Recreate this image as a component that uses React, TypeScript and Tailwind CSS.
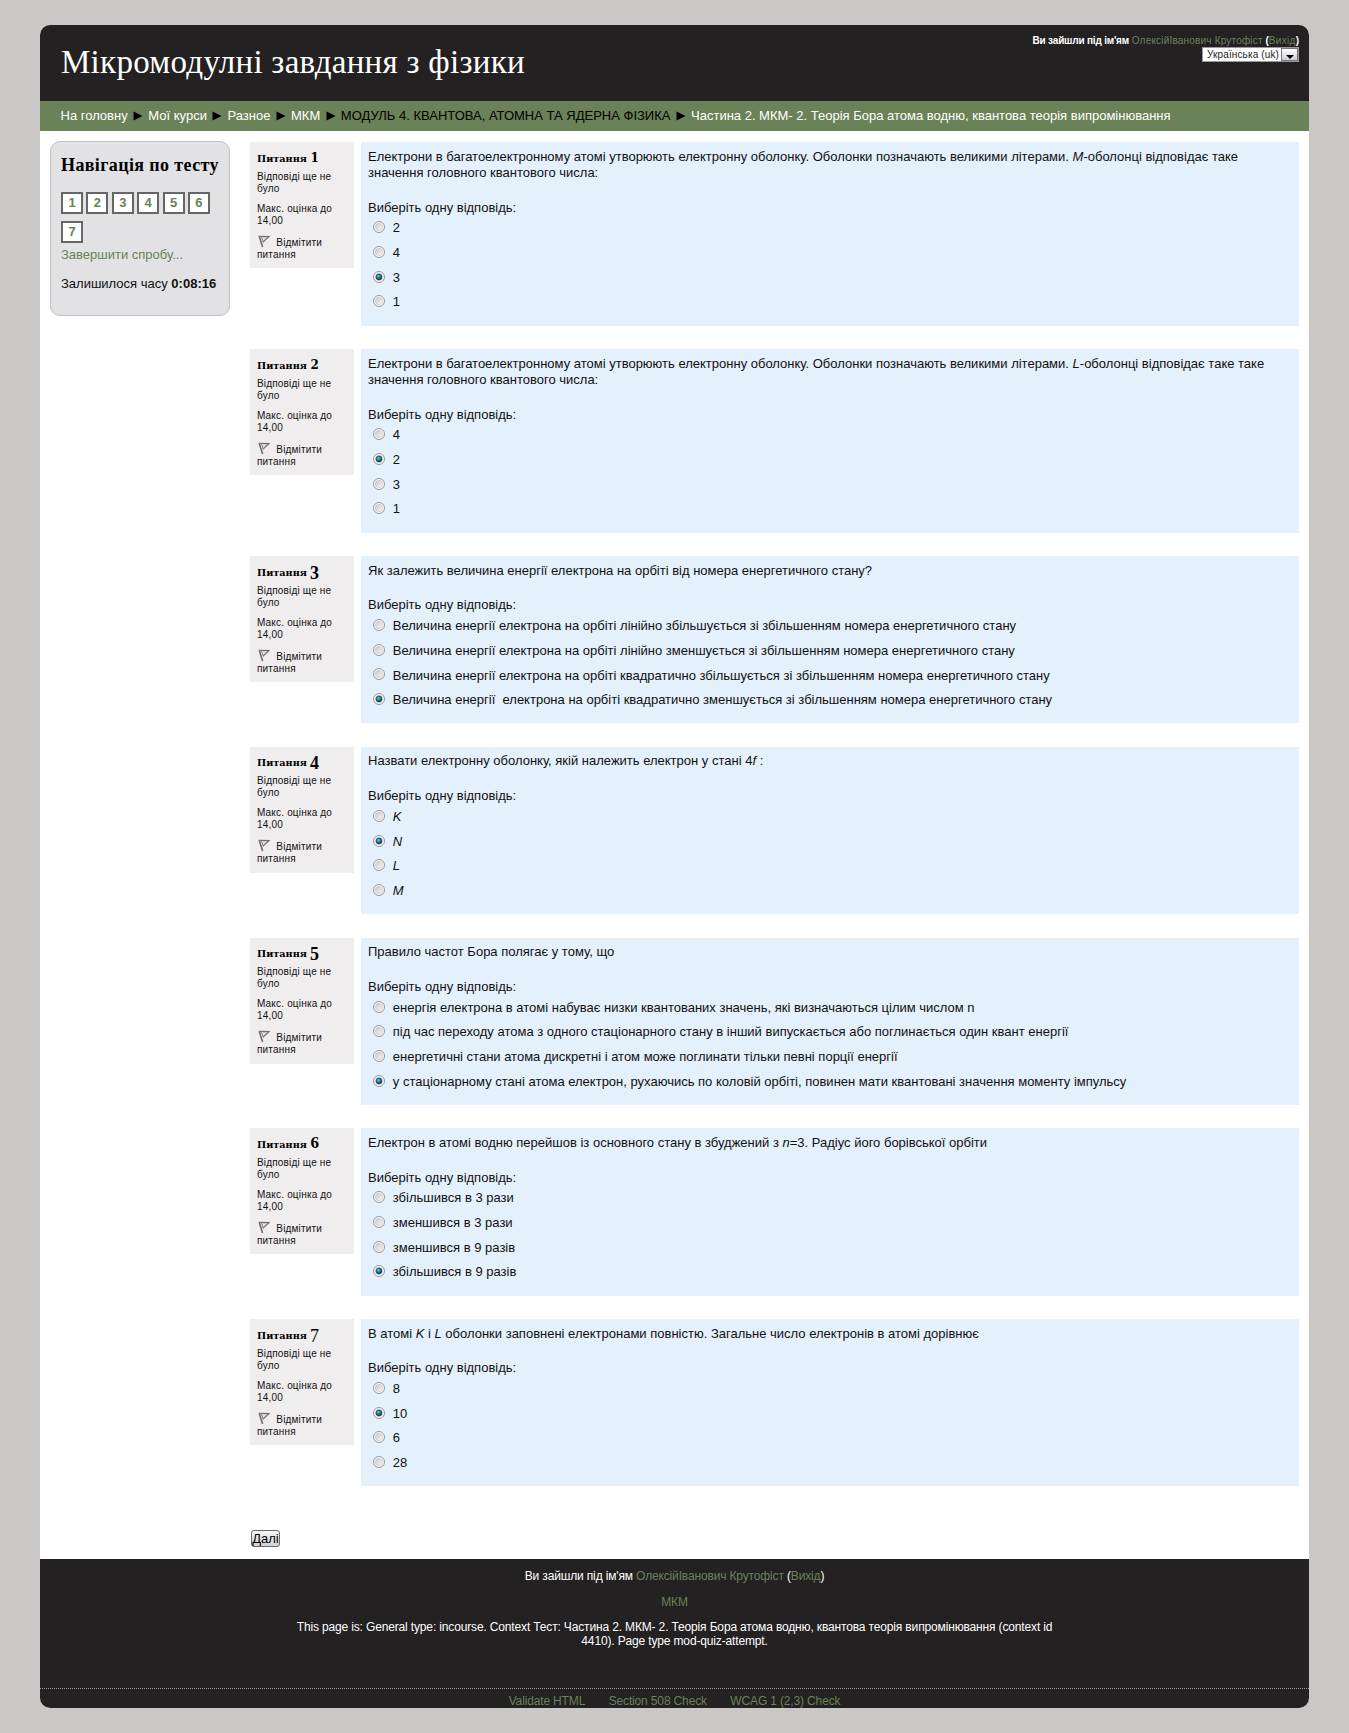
import React from "react";

type Option = { label: React.ReactNode; checked?: boolean };
type Question = { text: React.ReactNode; tall?: boolean; options: Option[] };

const questions: Question[] = [
  {
    tall: true,
    text: (
      <>
        Електрони в багатоелектронному атомі утворюють електронну оболонку. Оболонки позначають великими літерами.{" "}
        <i>M</i>-оболонці відповідає таке
        <br />
        значення головного квантового числа:
      </>
    ),
    options: [{ label: "2" }, { label: "4" }, { label: "3", checked: true }, { label: "1" }],
  },
  {
    tall: true,
    text: (
      <>
        Електрони в багатоелектронному атомі утворюють електронну оболонку. Оболонки позначають великими літерами.{" "}
        <i>L</i>-оболонці відповідає таке таке
        <br />
        значення головного квантового числа:
      </>
    ),
    options: [{ label: "4" }, { label: "2", checked: true }, { label: "3" }, { label: "1" }],
  },
  {
    text: "Як залежить величина енергії електрона на орбіті від номера енергетичного стану?",
    options: [
      { label: "Величина енергії електрона на орбіті лінійно збільшується зі збільшенням номера енергетичного стану" },
      { label: "Величина енергії електрона на орбіті лінійно зменшується зі збільшенням номера енергетичного стану" },
      { label: "Величина енергії електрона на орбіті квадратично збільшується зі збільшенням номера енергетичного стану" },
      {
        label: "Величина енергії \u00a0електрона на орбіті квадратично зменшується зі збільшенням номера енергетичного стану",
        checked: true,
      },
    ],
  },
  {
    text: (
      <>
        Назвати електронну оболонку, якій належить електрон у стані 4<i>f</i> :
      </>
    ),
    options: [{ label: <i>K</i> }, { label: <i>N</i>, checked: true }, { label: <i>L</i> }, { label: <i>M</i> }],
  },
  {
    text: "Правило частот Бора полягає у тому, що",
    options: [
      { label: "енергія електрона в атомі набуває низки квантованих значень, які визначаються цілим числом n" },
      { label: "під час переходу атома з одного стаціонарного стану в інший випускається або поглинається один квант енергії" },
      { label: "енергетичні стани атома дискретні і атом може поглинати тільки певні порції енергії" },
      {
        label: "у стаціонарному стані атома електрон, рухаючись по коловій орбіті, повинен мати квантовані значення моменту імпульсу",
        checked: true,
      },
    ],
  },
  {
    text: (
      <>
        Електрон в атомі водню перейшов із основного стану в збуджений з <i>n</i>=3. Радіус його борівської орбіти
      </>
    ),
    options: [
      { label: "збільшився в 3 рази" },
      { label: "зменшився в 3 рази" },
      { label: "зменшився в 9 разів" },
      { label: "збільшився в 9 разів", checked: true },
    ],
  },
  {
    text: (
      <>
        В атомі <i>K</i> і <i>L</i> оболонки заповнені електронами повністю. Загальне число електронів в атомі дорівнює
      </>
    ),
    options: [{ label: "8" }, { label: "10", checked: true }, { label: "6" }, { label: "28" }],
  },
];

function Radio({ checked }: { checked?: boolean }) {
  return (
    <svg viewBox="0 0 12 12" className="mb-[2px] h-3 w-3 shrink-0">
      <defs>
        <linearGradient id="well" x1="0" y1="0" x2="1" y2="1">
          <stop offset="0" stopColor="#c4c6ca" />
          <stop offset="1" stopColor="#fbfbfb" />
        </linearGradient>
        <radialGradient id="dot" cx="0.4" cy="0.35" r="0.7">
          <stop offset="0" stopColor="#7fd0f2" />
          <stop offset="0.45" stopColor="#1e7aa8" />
          <stop offset="1" stopColor="#0b3048" />
        </radialGradient>
      </defs>
      <circle cx="6" cy="6" r="5.5" fill="#fafafa" stroke="#8b8d8f" strokeWidth="0.9" />
      <circle cx="6" cy="6" r="3.7" fill="url(#well)" stroke="#b8babd" strokeWidth="0.5" />
      {checked && <circle cx="6" cy="6" r="2.9" fill="url(#dot)" stroke="#17364a" strokeWidth="0.6" />}
    </svg>
  );
}

/* Old-style figures: 1 and 2 sit at x-height, 3, 4, 5 and 7 hang below the baseline. */
function Figure({ n }: { n: number }) {
  if (n < 3) return <span className="ml-[3.5px] font-['DejaVu_Serif'] text-[12px] leading-[0]">{n}</span>;
  if (n === 6) return <span className="ml-[3.5px] text-[17px] leading-[0]">{n}</span>;
  if (n === 7) return <span className="relative top-[3px] ml-[3px] text-[18px] leading-[0] font-normal">{n}</span>;
  return <span className="relative top-[3px] ml-[3px] text-[18px] leading-[0]">{n}</span>;
}

function Info({ n }: { n: number }) {
  return (
    <div className="h-[126px] w-[104px] shrink-0 bg-[#efedee] pt-[8.5px] pl-[7px] text-[10px] leading-[12px] tracking-[0.18px]">
      <h3 className="flex h-4 items-baseline font-['Liberation_Serif'] font-bold tracking-normal text-black">
        <span className="font-['DejaVu_Serif'] text-[9.7px] leading-4">Питання</span>
        <Figure n={n} />
      </h3>
      <p className="mt-1">
        Відповіді ще не
        <br />
        було
      </p>
      <p className="mt-2">
        Макс. оцінка до
        <br />
        14,00
      </p>
      <div className="mt-[10px]">
        <div className="flex h-3">
          <svg viewBox="0 0 12 13" className="mt-[-2px] mr-[6px] ml-[1.3px] h-[13px] w-3" fill="none" stroke="#6e6e6e">
            <path d="M1.2 1 L4.6 12" strokeWidth="1.6" />
            <path d="M1.2 1.2 L11 1.6 L4.8 7.4" strokeWidth="1.1" />
            <path d="M3.4 1.8 L5.4 7" strokeWidth="0.9" />
            <path d="M5 2.6 L8.6 2.8 L5.8 5.2" strokeWidth="0.6" stroke="#a5a5a5" />
          </svg>
          Відмітити
        </div>
        питання
      </div>
    </div>
  );
}

function QuestionBlock({ q, n }: { q: Question; n: number }) {
  return (
    <section className="flex items-start gap-[7px]">
      <Info n={n} />
      <div className={`flex-1 bg-[#e4f0fb] pt-[6.5px] pl-[7px] whitespace-nowrap ${q.tall ? "h-[183.6px]" : "h-[167.3px]"}`}>
        <div className="leading-[16.3px]">{q.text}</div>
        <div className="mt-[18.6px] leading-[16.3px]">Виберіть одну відповідь:</div>
        {q.options.map((o, i) => (
          <label key={i} className="flex h-[24.7px] items-center pl-[5px] leading-[24.7px]">
            <Radio checked={o.checked} />
            <span className="ml-[7.8px] pt-[0.8px]">{o.label}</span>
          </label>
        ))}
      </div>
    </section>
  );
}

function Arrow() {
  return (
    <svg viewBox="0 0 10 10" className="mx-[5.3px] h-[10px] w-[10px] shrink-0" fill="#000">
      <path d="M0.5 0.5 L9.5 5 L0.5 9.5 Z" />
    </svg>
  );
}

export default function App() {
  return (
    <div className="h-[1733px] bg-[#c9c8c6] pt-[25px] pl-[40px] font-['Liberation_Sans',Arial,sans-serif] text-[13px] text-[#111]">
      <div className="flex h-[1683px] w-[1269px] flex-col overflow-hidden rounded-[10px] bg-white">
        <header className="flex h-[76px] shrink-0 justify-between bg-[#232122] pr-[10px] pl-[21px] text-white">
          <h1 className="pt-[19px] font-['Liberation_Serif'] text-[33px] leading-[36px] tracking-[0.28px]">
            Мікромодулні завдання з фізики
          </h1>
          <div className="flex flex-col items-end pt-[10px] text-[10px] leading-[12px]">
            <div className="whitespace-nowrap">
              <b className="tracking-[-0.19px]">Ви зайшли під ім'ям</b>{" "}
              <span className="tracking-[0.19px] text-[#6b8158]">ОлексійІванович Крутофіст</span> <b>(</b>
              <span className="tracking-[0.3px] text-[#6b8158]">Вихід</span>
              <b>)</b>
            </div>
            <div className="flex h-[15px] w-[97px] items-center justify-between border border-[#9a9a9e] bg-white pl-1 tracking-[0.13px] whitespace-nowrap text-[#222]">
              Українська (uk)
              <span className="flex h-[13px] w-[17px] items-end justify-center border border-[#77777b] bg-linear-to-b from-white to-[#cfcfd2] pb-px">
                <svg viewBox="0 0 8 4" className="h-1 w-2" fill="#000">
                  <path d="M0 0H8L4 4Z" />
                </svg>
              </span>
            </div>
          </div>
        </header>

        <nav className="flex h-[30px] shrink-0 items-center bg-[#6b8158] pl-[20.5px] whitespace-nowrap text-white">
          <span>На головну</span>
          <Arrow />
          <span>Мої курси</span>
          <Arrow />
          <span>Разное</span>
          <Arrow />
          <span>МКМ</span>
          <Arrow />
          <span className="text-black">МОДУЛЬ 4. КВАНТОВА, АТОМНА ТА ЯДЕРНА ФІЗИКА</span>
          <Arrow />
          <span>Частина 2. МКМ- 2. Теорія Бора атома водню, квантова теорія випромінювання</span>
        </nav>

        <div className="flex flex-1 items-start pl-[10px]">
          <aside className="mt-[10px] h-[175px] w-[180px] shrink-0 rounded-[10px] border border-[#c2c1c3] bg-[#e2e1e3] pl-[10px]">
            <h2 className="mt-[12px] font-['Liberation_Serif'] text-[18px] leading-[22px] font-bold tracking-[0.38px] whitespace-nowrap text-black">
              Навігація по тесту
            </h2>
            <div className="mt-[16px] flex flex-wrap gap-x-[3.4px] gap-y-[7px]">
              {[1, 2, 3, 4, 5, 6, 7].map((n) => (
                <span
                  key={n}
                  className="flex h-[22px] w-[22px] items-center justify-center border-2 border-[#666] bg-white font-bold text-[#6b8158]"
                >
                  {n}
                </span>
              ))}
            </div>
            <div className="mt-[3px] leading-[17px] text-[#6b8158]">Завершити спробу...</div>
            <div className="mt-[12px] leading-[17px] whitespace-nowrap">
              Залишилося часу <b>0:08:16</b>
            </div>
          </aside>

          <main className="mt-[11px] ml-5 w-[1049px]">
            <div className="flex flex-col gap-[23.45px]">
              {questions.map((q, i) => (
                <QuestionBlock key={i} q={q} n={i + 1} />
              ))}
            </div>
            <button className="mt-[44.2px] ml-px flex h-[17px] w-[29px] items-center justify-center rounded-[3px] border border-[#6a6a6e] bg-linear-to-b from-[#f8f8f8] to-[#d2d1d5] leading-[15px] text-black">
              Далі
            </button>
          </main>
        </div>

        <footer className="h-[149px] shrink-0 bg-[#232122] pt-[10px] text-center text-[12px] leading-[14px] tracking-[-0.15px] text-white">
          <div>
            Ви зайшли під ім'ям <span className="text-[#6b8158]">ОлексійІванович Крутофіст</span> (
            <span className="text-[#6b8158]">Вихід</span>)
          </div>
          <div className="mt-3 text-[#6b8158]">МКМ</div>
          <p className="mt-[11px] leading-[14px]">
            This page is: General type: incourse. Context Тест: Частина 2. МКМ- 2. Теорія Бора атома водню, квантова
            теорія випромінювання (context id
            <br />
            4410). Page type mod-quiz-attempt.
          </p>
          <div className="mt-[40px] flex justify-center gap-[23.5px] border-t border-dotted border-[#a0a0a0] pt-[5px] text-[#6b8158]">
            <span>Validate HTML</span>
            <span>Section 508 Check</span>
            <span>WCAG 1 (2,3) Check</span>
          </div>
        </footer>
      </div>
    </div>
  );
}
